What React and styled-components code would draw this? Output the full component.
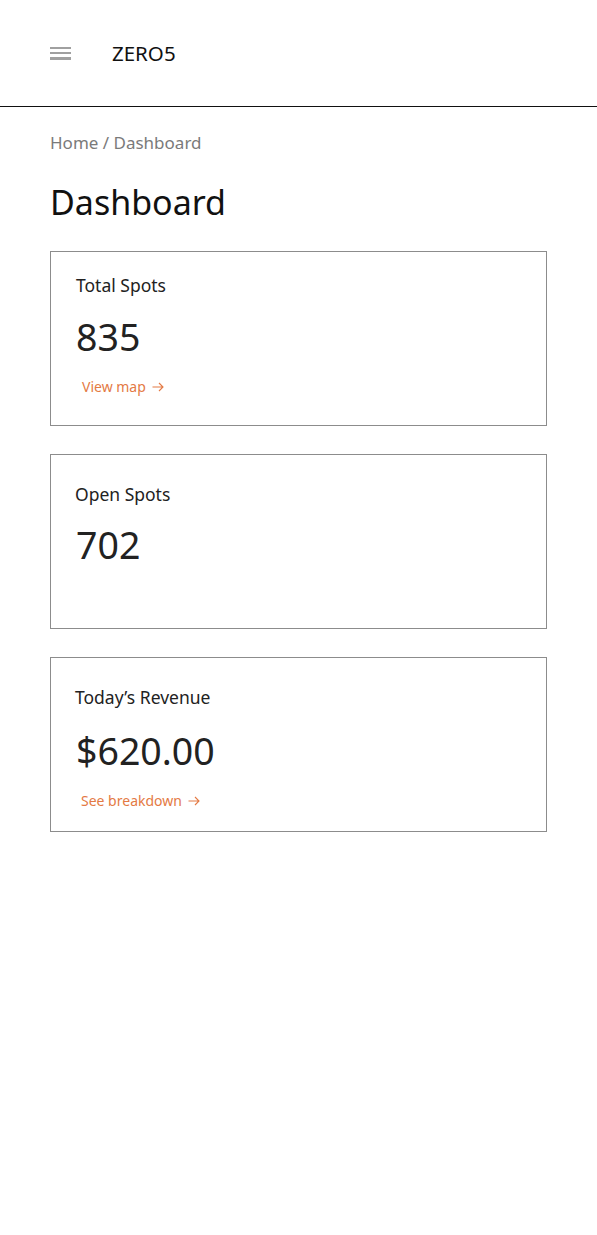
import React from "react";
import styled, { createGlobalStyle } from "styled-components";

const GlobalStyle = createGlobalStyle`
  * { box-sizing: border-box; }
  body {
    margin: 0;
    background: #fff;
    font-family: "Noto Sans", "Liberation Sans", sans-serif;
    color: #222;
  }
`;

const Header = styled.header`
  display: flex;
  align-items: center;
  height: 107px;
  padding: 0 50px;
  border-bottom: 1px solid #111;
`;

const MenuButton = styled.button`
  display: flex;
  flex-direction: column;
  justify-content: space-between;
  width: 21px;
  height: 13px;
  padding: 0;
  margin-right: 41px;
  border: none;
  background: none;

  span {
    display: block;
    height: 2.5px;
    background: #a0a0a0;
  }
`;

const Brand = styled.div`
  font-size: 20.5px;
  color: #111;
`;

const Main = styled.main`
  padding: 24px 50px 40px;
`;

const Crumbs = styled.div`
  font-size: 17px;
  color: #7a7a7a;
`;

const Title = styled.h1`
  margin: 25px 0 26px;
  font-size: 34px;
  font-weight: 400;
  color: #111;
`;

const CardList = styled.div`
  display: flex;
  flex-direction: column;
  gap: 28px;
`;

const Card = styled.section`
  display: flex;
  flex-direction: column;
  align-items: flex-start;
  height: 175px;
  padding: ${(p) => (p.$compact ? "21px" : "27px")} 24px 0
    ${(p) => (p.$compact ? "25px" : "24px")};
  border: 1px solid #8c8c8c;
`;

const Label = styled.div`
  font-size: 17.5px;
  color: #222;
`;

const Value = styled.div`
  margin-top: ${(p) => (p.$gap ? p.$gap : 16)}px;
  padding-left: ${(p) => p.$indent || 0}px;
  font-size: 37.5px;
  line-height: 1.2;
  color: #222;
`;

const CardLink = styled.a`
  display: flex;
  align-items: center;
  gap: 6px;
  margin-top: ${(p) => (p.$gap ? p.$gap : 20)}px;
  padding-left: 6px;
  font-size: 14px;
  color: #e47a44;
  text-decoration: none;

  svg {
    width: 12px;
    height: 10px;
  }
`;

const Arrow = () => (
  <svg viewBox="0 0 12 10" fill="none" stroke="currentColor" strokeWidth="1.1">
    <path d="M0.5 5h10.5M7 1l4 4-4 4" />
  </svg>
);

const cards = [
  { label: "Total Spots", value: "835", link: "View map", compact: true, valueGap: 17, linkGap: 18 },
  { label: "Open Spots", value: "702", indent: 1 },
  { label: "Today’s Revenue", value: "$620.00", link: "See breakdown", indent: 1, valueGap: 19, linkGap: 18 },
];

const App = () => {
  return (
    <>
      <GlobalStyle />
      <Header>
        <MenuButton aria-label="menu">
          <span />
          <span />
          <span />
        </MenuButton>
        <Brand>ZERO5</Brand>
      </Header>
      <Main>
        <Crumbs>Home / Dashboard</Crumbs>
        <Title>Dashboard</Title>
        <CardList>
          {cards.map((c) => (
            <Card key={c.label} $compact={c.compact}>
              <Label>{c.label}</Label>
              <Value $gap={c.valueGap} $indent={c.indent}>
                {c.value}
              </Value>
              {c.link && (
                <CardLink href="#" $gap={c.linkGap}>
                  {c.link}
                  <Arrow />
                </CardLink>
              )}
            </Card>
          ))}
        </CardList>
      </Main>
    </>
  );
};

export default App;
